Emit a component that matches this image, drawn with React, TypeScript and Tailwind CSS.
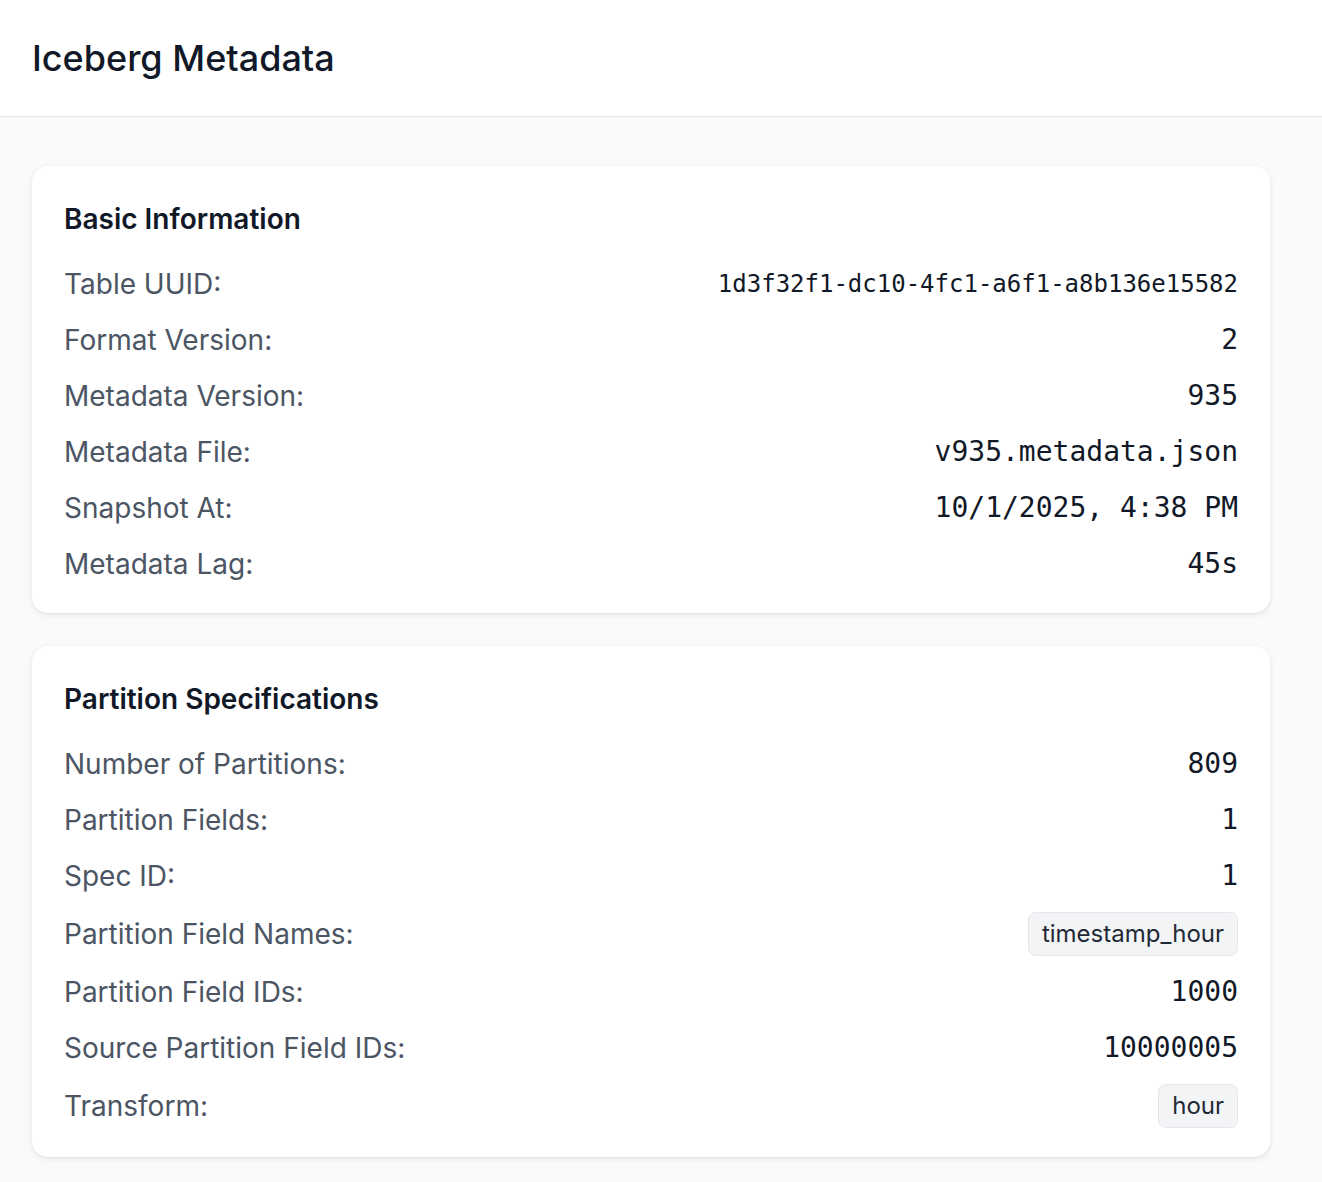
import React from "react";

type Row = {
  label: string;
  value: string;
  kind?: "mono" | "mono-sm" | "badge";
};

const basicRows: Row[] = [
  { label: "Table UUID:", value: "1d3f32f1-dc10-4fc1-a6f1-a8b136e15582", kind: "mono-sm" },
  { label: "Format Version:", value: "2" },
  { label: "Metadata Version:", value: "935" },
  { label: "Metadata File:", value: "v935.metadata.json" },
  { label: "Snapshot At:", value: "10/1/2025, 4:38 PM" },
  { label: "Metadata Lag:", value: "45s" },
];

const partitionRows: Row[] = [
  { label: "Number of Partitions:", value: "809" },
  { label: "Partition Fields:", value: "1" },
  { label: "Spec ID:", value: "1" },
  { label: "Partition Field Names:", value: "timestamp_hour", kind: "badge" },
  { label: "Partition Field IDs:", value: "1000" },
  { label: "Source Partition Field IDs:", value: "10000005" },
  { label: "Transform:", value: "hour", kind: "badge" },
];

const mono = { fontFamily: '"DejaVu Sans Mono", "Liberation Mono", monospace' };

const Value: React.FC<Row> = ({ value, kind }) => {
  if (kind === "badge") {
    return (
      <span className="rounded-[8px] border border-[#e5e7eb] bg-[#f3f4f6] px-[13px] py-[5px] text-[24px] leading-[32px] text-[#1f2937]">
        {value}
      </span>
    );
  }
  if (kind === "mono-sm") {
    return (
      <span className="text-[24px] leading-[40px] text-[#111827]" style={mono}>
        {value}
      </span>
    );
  }
  return (
    <span className="text-[28px] leading-[40px] text-[#111827]" style={mono}>
      {value}
    </span>
  );
};

const Section: React.FC<{ title: string; rows: Row[] }> = ({ title, rows }) => (
  <div className="rounded-[16px] bg-white px-8 pt-8 pb-[29px] shadow-[0_2px_6px_rgba(0,0,0,0.08),0_1px_3px_rgba(0,0,0,0.04)]">
    <h2 className="mb-[24px] text-[28px] leading-[42px] font-semibold text-[#111827]">{title}</h2>
    <div className="flex flex-col gap-4">
      {rows.map((row) => (
        <div key={row.label} className="flex items-center justify-between">
          <span className="text-[28px] leading-[40px] text-[#4b5563]">{row.label}</span>
          <Value {...row} />
        </div>
      ))}
    </div>
  </div>
);

export default function App() {
  return (
    <div
      className="min-h-screen bg-[#f9fafb]"
      style={{ fontFamily: 'Inter, "Noto Sans", "Liberation Sans", sans-serif' }}
    >
      <header className="flex h-[117px] items-center border-b border-[#e5e7eb] bg-white px-8">
        <h1 className="text-[36px] leading-[50px] font-medium text-[#111827]">Iceberg Metadata</h1>
      </header>
      <main className="flex flex-col gap-[33px] pt-[49px] pb-6 pl-8 pr-[52px]">
        <Section title="Basic Information" rows={basicRows} />
        <Section title="Partition Specifications" rows={partitionRows} />
      </main>
    </div>
  );
}
